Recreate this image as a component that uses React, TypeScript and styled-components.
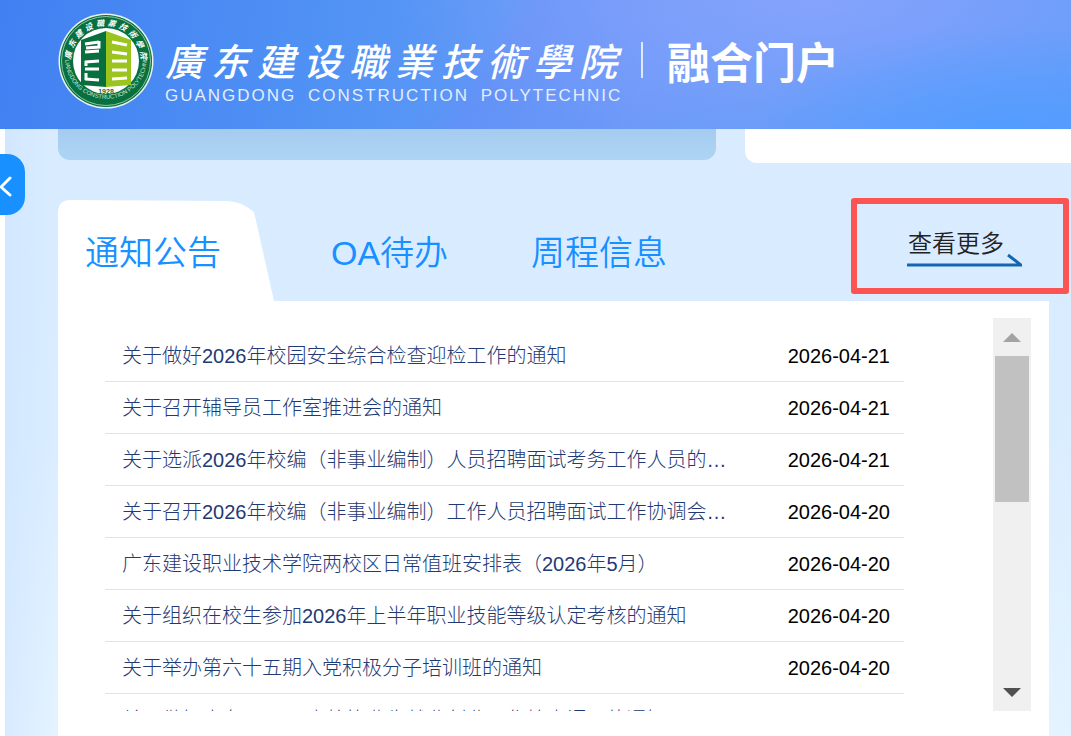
import React from 'react';
import styled, { createGlobalStyle } from 'styled-components';

const GlobalStyle = createGlobalStyle`
  *, *::before, *::after { box-sizing: border-box; }
  html, body { margin: 0; padding: 0; }
  body {
    background: #fff;
    font-family: 'Liberation Sans', 'Noto Sans CJK SC', sans-serif;
    overflow-x: hidden;
  }
  button { font: inherit; border: 0; padding: 0; background: none; cursor: pointer; }
  a { color: inherit; text-decoration: none; }
`;

const Page = styled.div`
  height: 100vh;
  display: flex;
  flex-direction: column;
  overflow: hidden;
`;

const Header = styled.header`
  display: flex;
  flex: none;
  height: 129px;
  padding: 12px 0 0 57px;
  color: #fff;
  background:
    radial-gradient(ellipse 260px 110px at 94% 105%, rgba(79, 157, 255, 0.9) 0%, rgba(79, 157, 255, 0) 100%),
    radial-gradient(ellipse 420px 150px at 76% 0%, #85a3fc 0%, rgba(133, 163, 252, 0) 100%),
    linear-gradient(125deg, transparent 44%, rgba(122, 128, 250, 0.2) 47%, transparent 70%),
    linear-gradient(100deg, #4080f2 0%, #5394f5 35%, #6c9bf8 60%, #619bfa 100%);
`;

const Seal = styled.svg`
  flex: none;
  width: 98px;
  height: 98px;
`;

const Wordmark = styled.div`
  display: flex;
  flex-direction: column;
  margin: 20px 0 0 10px;
  white-space: nowrap;
`;

const SchoolName = styled.span`
  font-family: 'Noto Sans CJK TC', sans-serif;
  font-size: 38px;
  font-weight: 500;
  font-style: italic;
  line-height: 56px;
  letter-spacing: 8px;
`;

const SchoolLatin = styled.span`
  font-size: 17px;
  line-height: 16px;
  letter-spacing: 2px;
  word-spacing: 5px;
  color: #e4edff;
`;

const PortalName = styled.h1`
  display: flex;
  align-items: center;
  gap: 24px;
  height: 64px;
  margin: 16px 0 0 16px;
  font-family: 'Noto Sans CJK SC', sans-serif;
  font-size: 43px;
  font-weight: 700;
  white-space: nowrap;
  &::before {
    content: '';
    width: 2px;
    height: 36px;
    background: #dfe9ff;
  }
`;

const Main = styled.main`
  position: relative;
  flex: 1;
  display: flex;
  flex-direction: column;
  margin-left: 5px;
  padding-left: 53px;
  background:
    linear-gradient(90deg, rgba(203, 226, 255, 0.5), rgba(203, 226, 255, 0) 50px),
    linear-gradient(180deg, #d9ecff 0%, #daedff 50%, #e4f3ff 100%);
`;

const Banners = styled.div`
  display: grid;
  grid-template-columns: 658fr 326fr;
  align-items: start;
  gap: 29px;
  height: 71px;
`;

const BlueBanner = styled.div`
  height: 31px;
  border-radius: 0 0 12px 12px;
  background: linear-gradient(180deg, #a5cbef, #aed4f5);
`;

const WhiteBanner = styled.div`
  height: 34px;
  border-radius: 0 0 0 12px;
  background: #fff;
`;

const Collapse = styled.button`
  position: absolute;
  left: -5px;
  top: 25px;
  width: 25px;
  height: 61px;
  border-radius: 0 18px 18px 0;
  background: #1890ff;
  svg { display: block; }
`;

const News = styled.section`
  flex: 1;
  display: flex;
  flex-direction: column;
  min-height: 0;
  margin-right: 22px;
`;

const TabBar = styled.div`
  display: flex;
  align-items: flex-start;
  height: 101px;
`;

const Tab = styled.button<{ $width: number }>`
  position: relative;
  flex: none;
  width: ${(p) => p.$width}px;
  height: 101px;
  padding: 0 0 0 27px;
  color: #1890ff;
  font-size: 34px;
  font-weight: 350;
  line-height: 106px;
  text-align: left;
  white-space: nowrap;
  span { position: relative; }
`;

const TabShape = styled.svg`
  position: absolute;
  left: 0;
  top: 0;
`;

const More = styled.a`
  position: relative;
  margin: 21px 27px 0 auto;
  width: 115px;
  height: 46px;
  padding-left: 1px;
  color: #222;
  font-family: 'Noto Sans CJK SC', sans-serif;
  font-size: 24px;
  font-weight: 350;
  line-height: 42px;
`;

const MoreLine = styled.svg`
  position: absolute;
  left: 0;
  bottom: 0;
`;

const Highlight = styled.span`
  position: absolute;
  left: -56px;
  top: -23px;
  width: 218px;
  height: 96px;
  border: 6px solid #fc5353;
  border-radius: 3px;
  pointer-events: none;
`;

const Panel = styled.div`
  flex: 1;
  display: flex;
  align-items: flex-start;
  padding: 17px 18px 0 47px;
  background: #fff;
`;

const List = styled.ul`
  flex: 1;
  min-width: 0;
  height: 393px;
  margin: 0 89px 0 0;
  padding: 12px 0 0;
  overflow: hidden;
  list-style: none;
`;

const Item = styled.li`
  display: flex;
  align-items: center;
  justify-content: space-between;
  height: 52px;
  padding: 0 14px 0 17px;
  border-bottom: 1px solid #e4e4e4;
  font-size: 20px;
  line-height: 30px;
  white-space: nowrap;
  a {
    flex: 0 1 613px;
    overflow: hidden;
    color: #1f3a75;
    font-weight: 300;
    text-overflow: ellipsis;
  }
  time { flex: none; color: #000; }
`;

const ScrollBar = styled.div`
  display: flex;
  flex: none;
  flex-direction: column;
  width: 38px;
  height: 393px;
  padding: 0 2px;
  background: #f0f0f0;
`;

const ScrollArrow = styled.button`
  flex: none;
  height: 38px;
  svg { display: block; margin: 0 auto; }
`;

const Thumb = styled.div`
  height: 146px;
  margin-bottom: auto;
  background: #c1c1c1;
`;

const notices = [
  ['关于做好2026年校园安全综合检查迎检工作的通知', '2026-04-21'],
  ['关于召开辅导员工作室推进会的通知', '2026-04-21'],
  ['关于选派2026年校编（非事业编制）人员招聘面试考务工作人员的通知', '2026-04-21'],
  ['关于召开2026年校编（非事业编制）工作人员招聘面试工作协调会的通知', '2026-04-20'],
  ['广东建设职业技术学院两校区日常值班安排表（2026年5月）', '2026-04-20'],
  ['关于组织在校生参加2026年上半年职业技能等级认定考核的通知', '2026-04-20'],
  ['关于举办第六十五期入党积极分子培训班的通知', '2026-04-20'],
  ['关于做好广东2026届高校毕业生就业创业工作检查调研的通知', ''],
];

function SchoolSeal() {
  return (
    <Seal viewBox="0 0 98 98" role="img" aria-label="校徽">
      <defs>
        <path id="sealTop" d="M15.500 59A35 35 0 1 1 82.500 59" />
        <path id="sealBottom" d="M8 46A41 41 0 1 0 90 46" />
      </defs>
      <circle cx="49" cy="49" r="47.500" fill="#e9f5ec" />
      <circle cx="49" cy="49" r="46" fill="#08703e" />
      <circle cx="49" cy="49" r="44.500" fill="none" stroke="#8fc5a5" strokeWidth="1" />
      <circle cx="49" cy="49" r="33" fill="#fff" />
      <text fill="#fff" fontSize="8" fontStyle="italic" fontWeight="700" letterSpacing="3" fontFamily="Noto Sans CJK TC, sans-serif">
        <textPath href="#sealTop" startOffset="51%" textAnchor="middle">廣东建设職業技術學院</textPath>
      </text>
      <text fill="#c9e6d3" fontSize="6" fontFamily="Liberation Sans, sans-serif">
        <textPath href="#sealBottom" startOffset="50%" textAnchor="middle">GUANGDONG CONSTRUCTION POLYTECHNIC</textPath>
      </text>
      <path d="M24 28L49 19V75L24 73Z" fill="#08703e" />
      <path d="M49 19L74 28V73L49 75Z" fill="#9bc51d" />
      <g fill="none" stroke="#fff" strokeWidth="3">
        <path d="M28 32L42 30M28 40L42 39M28 50L42 49M28 57H42M28 67L42 68M42 29V35L29 36M29 49V54M29 61V68" />
        <path d="M55 30L70 33M55 40L70 42M55 49H70M55 58H70M55 67L70 66" />
      </g>
      <text x="49" y="82" fill="#08703e" fontSize="7" fontWeight="700" textAnchor="middle" fontFamily="Liberation Sans, sans-serif">1928</text>
    </Seal>
  );
}

export default function App() {
  return (
    <>
      <GlobalStyle />
      <Page>
        <Header>
          <SchoolSeal />
          <Wordmark>
            <SchoolName>廣东建设職業技術學院</SchoolName>
            <SchoolLatin>GUANGDONG CONSTRUCTION POLYTECHNIC</SchoolLatin>
          </Wordmark>
          <PortalName>融合门户</PortalName>
        </Header>
        <Main>
          <Banners>
            <BlueBanner />
            <WhiteBanner />
          </Banners>
          <Collapse aria-label="收起">
            <svg width="25" height="61" viewBox="0 0 25 61" fill="none" stroke="#fff" strokeWidth="3" strokeLinecap="round" strokeLinejoin="round">
              <path d="M10 24L1 33L10 41" />
            </svg>
          </Collapse>
          <News>
            <TabBar>
              <Tab $width={246}>
                <TabShape width="216" height="101" viewBox="0 0 216 101" fill="#fff" aria-hidden="true">
                  <path d="M0 101V13Q0 0 13 0L168 1Q183 1 196 12L216 101Z" />
                </TabShape>
                <span>通知公告</span>
              </Tab>
              <Tab $width={200}><span>OA待办</span></Tab>
              <Tab $width={200}><span>周程信息</span></Tab>
              <More href="#more">
                查看更多
                <MoreLine width="115" height="14" viewBox="0 0 115 14" fill="none" stroke="#1565b0" strokeWidth="3" aria-hidden="true">
                  <path d="M0 12H114L101 2" />
                </MoreLine>
                <Highlight />
              </More>
            </TabBar>
            <Panel>
              <List>
                {notices.map(([title, date]) => (
                  <Item key={title}>
                    <a href="#notice">{title}</a>
                    {date && <time>{date}</time>}
                  </Item>
                ))}
              </List>
              <ScrollBar>
                <ScrollArrow aria-label="向上滚动">
                  <svg width="18" height="9" viewBox="0 0 18 9" fill="#a3a3a3"><path d="M9 0L18 9H0Z" /></svg>
                </ScrollArrow>
                <Thumb />
                <ScrollArrow aria-label="向下滚动">
                  <svg width="18" height="9" viewBox="0 0 18 9" fill="#505050"><path d="M0 0H18L9 9Z" /></svg>
                </ScrollArrow>
              </ScrollBar>
            </Panel>
          </News>
        </Main>
      </Page>
    </>
  );
}
